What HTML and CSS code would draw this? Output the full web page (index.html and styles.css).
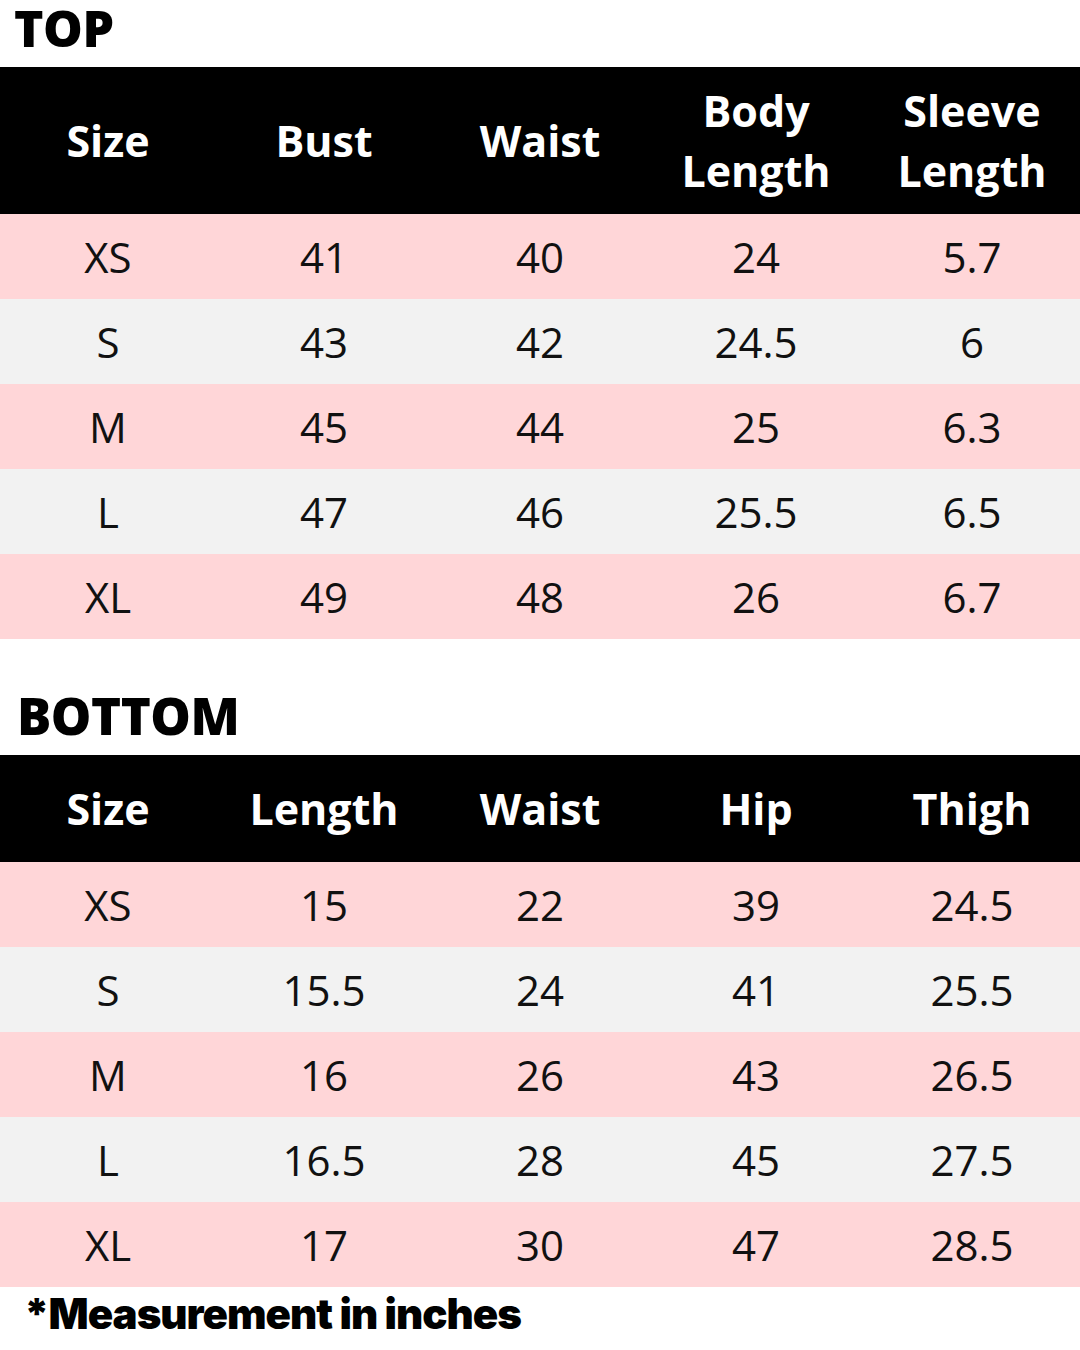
FILE: index.html
```html
<!DOCTYPE html>
<html>
<head>
<meta charset="utf-8">
<link rel="stylesheet" href="styles.css">
</head>
<body>
<div class="page">
  <h2 class="title title-top">TOP</h2>
  <div class="chart">
    <div class="head head-top">
      <div class="hc">Size</div>
      <div class="hc">Bust</div>
      <div class="hc">Waist</div>
      <div class="hc">Body<br>Length</div>
      <div class="hc">Sleeve<br>Length</div>
    </div>
    <div class="row pink"><div>XS</div><div>41</div><div>40</div><div>24</div><div>5.7</div></div>
    <div class="row grey"><div>S</div><div>43</div><div>42</div><div>24.5</div><div>6</div></div>
    <div class="row pink"><div>M</div><div>45</div><div>44</div><div>25</div><div>6.3</div></div>
    <div class="row grey"><div>L</div><div>47</div><div>46</div><div>25.5</div><div>6.5</div></div>
    <div class="row pink"><div>XL</div><div>49</div><div>48</div><div>26</div><div>6.7</div></div>
  </div>
  <h2 class="title title-bottom">BOTTOM</h2>
  <div class="chart">
    <div class="head head-bottom">
      <div class="hc">Size</div>
      <div class="hc">Length</div>
      <div class="hc">Waist</div>
      <div class="hc">Hip</div>
      <div class="hc">Thigh</div>
    </div>
    <div class="row pink"><div>XS</div><div>15</div><div>22</div><div>39</div><div>24.5</div></div>
    <div class="row grey"><div>S</div><div>15.5</div><div>24</div><div>41</div><div>25.5</div></div>
    <div class="row pink"><div>M</div><div>16</div><div>26</div><div>43</div><div>26.5</div></div>
    <div class="row grey"><div>L</div><div>16.5</div><div>28</div><div>45</div><div>27.5</div></div>
    <div class="row pink"><div>XL</div><div>17</div><div>30</div><div>47</div><div>28.5</div></div>
  </div>
  <p class="note">*Measurement in inches</p>
</div>
</body>
</html>
```
FILE: styles.css
```css
* { box-sizing: border-box; }
html, body { margin: 0; padding: 0; background: #ffffff; }
.page {
  width: 1080px;
  height: 1350px;
  overflow: hidden;
  font-family: "Open Sans", "Liberation Sans", sans-serif;
  color: #111111;
}
.title {
  margin: 0;
  font-weight: 800;
  color: #000;
  letter-spacing: -0.5px;
}
.title-top {
  height: 67px;
  font-size: 50px;
  line-height: 56px;
  padding: 0 0 0 14px;
}
.title-bottom {
  height: 116px;
  font-size: 51px;
  line-height: 60px;
  padding: 46px 0 0 17px;
}
.head, .row {
  display: grid;
  grid-template-columns: repeat(5, 1fr);
}
.head {
  background: #000;
  color: #fff;
  font-weight: 700;
  font-size: 43px;
  line-height: 60px;
}
.head-top { height: 147px; }
.head-bottom { height: 107px; }
.hc {
  display: flex;
  align-items: center;
  justify-content: center;
  text-align: center;
}
.row {
  height: 85px;
  font-size: 42px;
  font-weight: 400;
  color: #111;
}
.row > div {
  display: flex;
  align-items: center;
  justify-content: center;
}
.pink { background: #ffd6d8; }
.grey { background: #f2f2f2; }
.note {
  margin: 0;
  padding: 2px 0 0 24px;
  font-family: "Inter", "Liberation Sans", sans-serif;
  font-weight: 900;
  font-size: 42px;
  line-height: 50px;
  letter-spacing: -1px;
  color: #000;
}
```
